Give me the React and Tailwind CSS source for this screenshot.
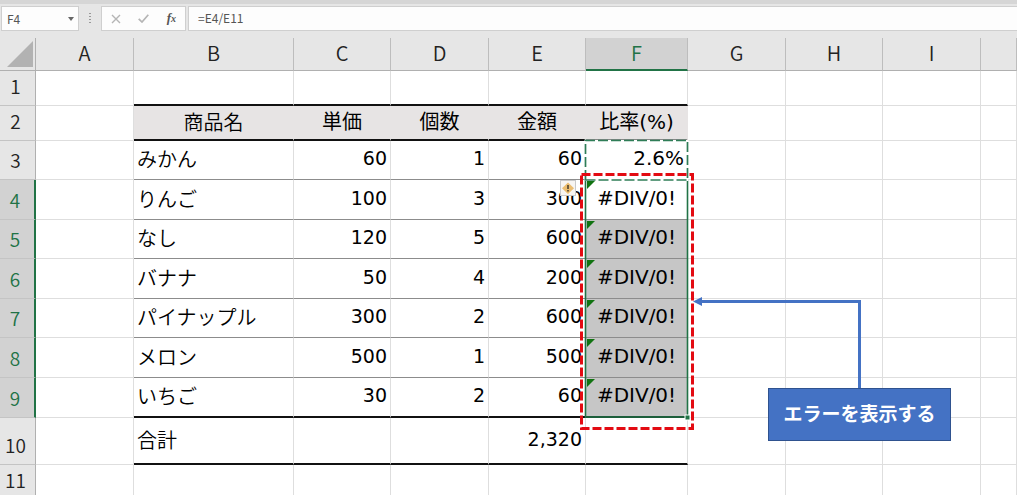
import clsx from "clsx";

const columns = ["A", "B", "C", "D", "E", "F", "G", "H", "I", ""];

const rows = [
  { id: 1, height: "h-[35px]" },
  {
    id: 2,
    height: "h-[35px]",
    heading: true,
    cells: ["商品名", "単価", "個数", "金額", "比率(%)"],
  },
  { id: 3, height: "h-[39px]", cells: ["みかん", "60", "1", "60", "2.6%"] },
  { id: 4, height: "h-[40px]", cells: ["りんご", "100", "3", "300", "#DIV/0!"] },
  { id: 5, height: "h-[39px]", cells: ["なし", "120", "5", "600", "#DIV/0!"] },
  { id: 6, height: "h-[40px]", cells: ["バナナ", "50", "4", "200", "#DIV/0!"] },
  { id: 7, height: "h-[39px]", cells: ["パイナップル", "300", "2", "600", "#DIV/0!"] },
  { id: 8, height: "h-[40px]", cells: ["メロン", "500", "1", "500", "#DIV/0!"] },
  { id: 9, height: "h-[40px]", cells: ["いちご", "30", "2", "60", "#DIV/0!"] },
  { id: 10, height: "h-[47px]", cells: ["合計", "", "", "2,320", ""] },
  { id: 11, height: "h-[35px]" },
];

const isSelected = (id) => id >= 4 && id <= 9;

function FormulaBar() {
  return (
    <div className="flex h-[38px] shrink-0 items-start border-t-4 border-[#d6d6d6] bg-[#e6e6e6] pt-[2px] font-['Noto_Sans_CJK_JP',sans-serif] text-xs text-[#555]">
      <div className="ml-px flex h-[25px] w-[78px] items-center border border-[#cfcfcf] bg-[#fdfdfd]">
        <input
          aria-label="Name Box"
          defaultValue="F4"
          className="w-full min-w-0 flex-1 bg-transparent pl-[5px] outline-none"
        />
        <button aria-label="Open Name Box" className="px-1">
          <svg width="6" height="4" viewBox="0 0 6 4" fill="#666">
            <path d="M0 0h6L3 4z" />
          </svg>
        </button>
      </div>
      <svg className="mx-[10px] mt-[7px]" width="2" height="11" fill="#999">
        <path d="M0 0h2v1H0zM0 3h2v1H0zM0 6h2v1H0zM0 9h2v1H0z" />
      </svg>
      <div className="flex h-[25px] w-[85px] items-center justify-between border border-[#cfcfcf] bg-[#fdfdfd] px-[9px]">
        <button aria-label="Cancel">
          <svg width="10" height="10" viewBox="0 0 10 10" stroke="#b5b5b5" strokeWidth="1.4">
            <path d="M1 1l8 8M9 1L1 9" />
          </svg>
        </button>
        <button aria-label="Enter">
          <svg width="11" height="9" viewBox="0 0 11 9" fill="none" stroke="#b5b5b5" strokeWidth="1.7">
            <path d="M.7 4.8L4 8 10.3.8" />
          </svg>
        </button>
        <button
          aria-label="Insert Function"
          className="font-['Liberation_Serif',serif] text-[13px] leading-4 font-bold italic"
        >
          f<span className="text-[10px]">x</span>
        </button>
      </div>
      <input
        aria-label="Formula"
        defaultValue="=E4/E11"
        className="ml-[2px] h-[25px] min-w-0 flex-1 border border-r-0 border-[#cfcfcf] bg-[#fdfdfd] pb-[3px] pl-[9px] outline-none"
      />
    </div>
  );
}

function Row({ row }) {
  const selected = isSelected(row.id);
  return (
    <tr className={row.height}>
      <th
        scope="row"
        className={clsx(
          "border-b border-b-[#c4c4c4] pr-1 pb-[5px] text-center align-bottom font-['Noto_Sans_CJK_JP',sans-serif] text-[19px] leading-7 font-[350]",
          selected
            ? "border-r-2 border-r-[#217346] bg-[#d2d2d2] text-[#217346]"
            : "border-r border-r-[#b0b0b0] bg-[#e6e6e6] text-[#222]"
        )}
      >
        {row.id}
      </th>
      {columns.map((col, i) => {
        const inTable = i >= 1 && i <= 5;
        const error = i === 5 && selected;
        const text = inTable && row.cells ? row.cells[i - 1] : "";
        return (
          <td
            key={i}
            className={clsx(
              "relative border-r px-[3px] whitespace-nowrap",
              inTable && row.heading ? "border-r-[#e7e4e4] bg-[#e7e4e4]" : "border-r-[#dedede]",
              inTable && [1, 2, 9, 10].includes(row.id)
                ? "border-b-2 border-b-[#111]"
                : inTable && row.id > 2 && row.id < 9
                  ? "border-b border-b-[#8c8c8c]"
                  : "border-b border-b-[#dedede]",
              row.heading || error ? "text-center" : i === 1 ? "text-left" : "text-right",
              i === 1 || i === 5 || row.heading
                ? "text-xl leading-7"
                : "text-[19px] leading-7",
              i === 1 || row.heading ? "pb-0.5" : "pb-1",
              i === 1 && "font-['Noto_Sans_CJK_JP',sans-serif] font-[350]",
              error && row.id > 4 && "bg-[#c6c6c6]"
            )}
          >
            {text}
            {error && (
              <svg className="absolute top-px left-px" width="8" height="8" fill="#117311">
                <path d="M0 0h8L0 8z" />
              </svg>
            )}
          </td>
        );
      })}
    </tr>
  );
}

function Sheet() {
  return (
    <table className="w-full table-fixed border-separate border-spacing-0 font-['DejaVu_Sans','Noto_Sans_CJK_JP',sans-serif] text-black">
      <colgroup>
        <col className="w-[36px]" />
        <col className="w-[98px]" />
        <col className="w-[160px]" />
        <col className="w-[97px]" />
        <col className="w-[98px]" />
        <col className="w-[97px]" />
        <col className="w-[102px]" />
        <col className="w-[98px]" />
        <col className="w-[97px]" />
        <col className="w-[98px]" />
        <col />
      </colgroup>
      <thead>
        <tr className="h-[33px] font-['Noto_Sans_CJK_JP',sans-serif] text-xl leading-7 text-[#222]">
          <td className="border-r border-b border-[#b0b0b0] bg-[#e6e6e6] pl-[7px]">
            <svg width="26" height="26" fill="#b2b2b2">
              <path d="M26 0v26H0z" />
            </svg>
          </td>
          {columns.map((col, i) => (
            <th
              key={i}
              scope="col"
              className={clsx(
                "border-r border-r-[#bdbdbd] pb-0.5 font-[350]",
                col === "F"
                  ? "border-b-2 border-b-[#217346] bg-[#d2d2d2] text-[#217346]"
                  : "border-b border-b-[#b0b0b0] bg-[#e6e6e6]"
              )}
            >
              {col}
            </th>
          ))}
        </tr>
      </thead>
      <tbody>
        {rows.map((row) => (
          <Row key={row.id} row={row} />
        ))}
      </tbody>
    </table>
  );
}

// Selection frame, copy marquee and the callout drawn over the cells
function Annotations() {
  return (
    <>
      <svg
        className="pointer-events-none absolute top-0 left-0"
        width="960"
        height="457"
        viewBox="0 0 960 457"
        fill="none"
      >
        <rect x="585.5" y="142" width="102" height="237" stroke="#217346" strokeWidth="1.6" />
        <path d="M585.5 142V102.5H687.5V142z" stroke="#fff" strokeWidth="2" />
        <path
          d="M585.5 142V102.5H687.5V142z"
          stroke="#2f7d57"
          strokeWidth="1.7"
          strokeDasharray="10 3"
        />
        <rect x="685" y="377" width="5" height="5" fill="#217346" stroke="#fff" />
        <rect
          x="581.5"
          y="136.5"
          width="111"
          height="254"
          stroke="#e30b12"
          strokeWidth="3"
          strokeDasharray="9 3"
        />
        <path d="M859.5 350V263.5H700" stroke="#4472c4" strokeWidth="3" />
        <path d="M693 263.5l9-4.5v9z" fill="#4472c4" />
        <rect x="560.5" y="142.5" width="15" height="15" fill="#f7f5f2" stroke="#c9c9c9" />
        <path d="M568 144.5l6 5.7-6 5.7-6-5.7z" fill="#ebbd70" />
        <path d="M568 147v4M568 152v1.5" stroke="#443a2a" strokeWidth="1.5" />
      </svg>
      <div className="absolute top-[350px] left-[768px] flex h-[53px] w-[183px] items-center justify-center border border-[#2f528f] bg-[#4472c4] pb-[3px] font-['Noto_Sans_CJK_JP',sans-serif] text-[19px] leading-7 font-bold text-white">
        エラーを表示する
      </div>
    </>
  );
}

export default function App() {
  return (
    <div className="flex h-screen flex-col overflow-hidden bg-white">
      <FormulaBar />
      <main className="relative flex-1">
        <Sheet />
        <Annotations />
      </main>
    </div>
  );
}
